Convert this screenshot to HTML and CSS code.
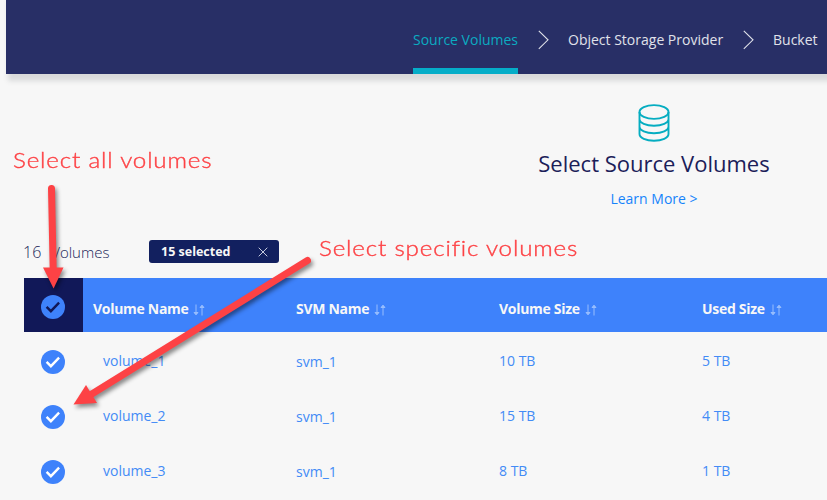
FILE: index.html
```html
<!DOCTYPE html>
<html lang="en">
<head>
<meta charset="utf-8">
<title>Select Source Volumes</title>
<link rel="stylesheet" href="styles.css">
</head>
<body>
<svg class="defs" width="0" height="0">
  <symbol id="check" viewBox="0 0 24 24"><circle cx="12" cy="12" r="12" fill="#3e82fb"/><path d="M5.600 11.900l4.300 4.300 8.200-8.500" fill="none" stroke="currentColor" stroke-width="2.400"/></symbol>
  <symbol id="sort" viewBox="0 0 12 12"><path d="M3 .5v10M1 8.500L3 10.800 5 8.500zM9 11.500v-10M7 3.500L9 1.200 11 3.500z" fill="currentColor" stroke="currentColor"/></symbol>
  <symbol id="chevron" viewBox="0 0 11 20"><path d="M.8.800L10 9.800.8 18.800" fill="none" stroke="currentColor" stroke-width="1.100"/></symbol>
</svg>
<div class="app">
  <header class="topbar">
    <nav class="steps">
      <span class="step step-source active">Source Volumes</span>
      <svg class="chevron"><use href="#chevron"/></svg>
      <span class="step step-provider">Object Storage Provider</span>
      <svg class="chevron"><use href="#chevron"/></svg>
      <span class="step">Bucket</span>
    </nav>
  </header>
  <section class="intro">
    <svg class="database" viewBox="0 0 32 38" fill="none" stroke="#05adc1" stroke-width="1.900">
      <ellipse cx="16" cy="8" rx="14.500" ry="6.900"/>
      <path d="M1.500 8v22c0 3.900 6.500 6.700 14.500 6.700s14.500-2.800 14.500-6.700V8M1.500 15c0 4 6.500 6.700 14.500 6.700S30.500 19 30.500 15M1.500 22.500c0 4 6.500 6.700 14.500 6.700s14.500-2.700 14.500-6.700"/>
    </svg>
    <h1>Select Source Volumes</h1>
    <a class="learn">Learn More &gt;</a>
  </section>
  <div class="toolbar">
    <span class="count">16<span class="count-label">Volumes</span></span>
    <span class="chip"><b>15 selected</b><svg width="10" height="10" viewBox="0 0 10 10"><path d="M.7.700l8.600 8.600M9.300.700L.7 9.300" stroke="#c6cbdf" stroke-width="1"/></svg></span>
  </div>
  <div class="table">
    <div class="row head">
      <span class="select"><svg class="check"><use href="#check"/></svg></span>
      <span class="cell name">Volume Name<svg class="sort"><use href="#sort"/></svg></span>
      <span class="cell">SVM Name<svg class="sort"><use href="#sort"/></svg></span>
      <span class="cell">Volume Size<svg class="sort"><use href="#sort"/></svg></span>
      <span class="cell">Used Size<svg class="sort"><use href="#sort"/></svg></span>
    </div>
    <div class="row"><span class="select"><svg class="check"><use href="#check"/></svg></span><span class="cell name">volume_1</span><span class="cell svm">svm_1</span><span class="cell">10 TB</span><span class="cell">5 TB</span></div>
    <div class="row"><span class="select"><svg class="check"><use href="#check"/></svg></span><span class="cell name">volume_2</span><span class="cell svm">svm_1</span><span class="cell">15 TB</span><span class="cell">4 TB</span></div>
    <div class="row"><span class="select"><svg class="check"><use href="#check"/></svg></span><span class="cell name">volume_3</span><span class="cell svm">svm_1</span><span class="cell">8 TB</span><span class="cell">1 TB</span></div>
  </div>
</div>
<svg class="arrows" viewBox="0 0 827 500">
  <g fill="#fd4245" stroke="#fd4245">
    <path d="M51.500 188.500L53.200 270" stroke-width="7" stroke-linecap="round"/>
    <path d="M43 267.500h20.500L53.600 288.500z" stroke="none"/>
    <path d="M307.500 260.500L91 394.500" stroke-width="7" stroke-linecap="round"/>
    <path d="M73.500 404.500L86 385l11 18z" stroke="none"/>
  </g>
</svg>
<span class="note note-all">Select all volumes</span>
<span class="note note-specific">Select specific volumes</span>
</body>
</html>
```
FILE: styles.css
```css
* { box-sizing: border-box; }
body {
  margin: 0;
  width: 827px;
  height: 500px;
  overflow: hidden;
  background: #f7f7f7;
  font: 14px/20px "Open Sans", sans-serif;
}
svg { flex: none; }
.defs { position: absolute; }
.app { padding-left: 6px; }
.topbar {
  height: 74px;
  padding-left: 407px;
  background: #282f66;
  box-shadow: 5px 4px 5px 3px #d9dadb;
}
.steps { display: flex; align-items: center; height: 74px; color: #e0e2ea; white-space: nowrap; }
.step { padding-top: 6px; height: 74px; line-height: 68px; }
.step-source { width: 105px; }
.step-provider { width: 155px; }
.active { color: #0babc1; border-bottom: 6px solid #05adc8; }
.chevron { width: 11px; height: 20px; margin: 5px 19.5px 0 19.5px; }
.intro {
  display: flex;
  flex-direction: column;
  align-items: center;
  width: 300px;
  margin: 30px 0 0 498px;
}
.database { width: 32px; height: 38px; }
h1 { margin: 6px 0 0; font-size: 22px; line-height: 30px; font-weight: 400; color: #1b2059; white-space: nowrap; }
.learn { margin-top: 11px; color: #1684fb; }
.toolbar { display: flex; align-items: center; margin: 31px 0 0 17px; height: 23px; }
.count { width: 126px; padding-top: 1px; font-size: 16px; font-weight: 300; color: #202557; }
.count-label { margin-left: 10px; font-size: 15px; }
.chip {
  display: flex;
  align-items: center;
  justify-content: space-between;
  width: 130px;
  height: 23px;
  padding: 0 11px 0 12px;
  border-radius: 3px;
  background: #12205f;
  color: #f7f7f7;
  font-size: 12.5px;
}
.table { margin: 15px 0 0 18px; width: 803px; overflow: hidden; }
.row { display: flex; width: 871px; height: 55px; padding-top: 4px; align-items: center; color: #438bf6; }
.select { display: flex; flex: none; align-items: center; width: 59px; padding-left: 17px; color: #fff; }
.check { width: 24px; height: 24px; }
.cell { flex: none; width: 203px; padding: 0 0 2px 10px; white-space: nowrap; }
.name { padding-left: 20px; }
.svm { padding-bottom: 0; }
.head { height: 54px; padding: 0; background: #3e82fb; color: #f7f7f7; font-weight: 700; letter-spacing: -.3px; }
.head .select { height: 54px; padding-top: 4px; background: #111858; color: #111858; }
.head .cell { padding: 7px 0 0 10px; }
.sort { width: 12px; height: 12px; margin-left: 5px; vertical-align: -2px; color: #97bdfd; }
.arrows { position: absolute; inset: 0; width: 827px; height: 500px; filter: drop-shadow(2px 3px 2px rgba(0, 0, 0, .45)); }
.note {
  position: absolute;
  color: #fd4245;
  font: 300 22px/28px Lato, sans-serif;
  letter-spacing: .75px;
  -webkit-text-stroke: .4px #fd4245;
  white-space: nowrap;
  transform: scaleX(1.1);
  transform-origin: left;
}
.note-all { left: 13px; top: 146px; }
.note-specific { left: 319px; top: 234px; }
```
